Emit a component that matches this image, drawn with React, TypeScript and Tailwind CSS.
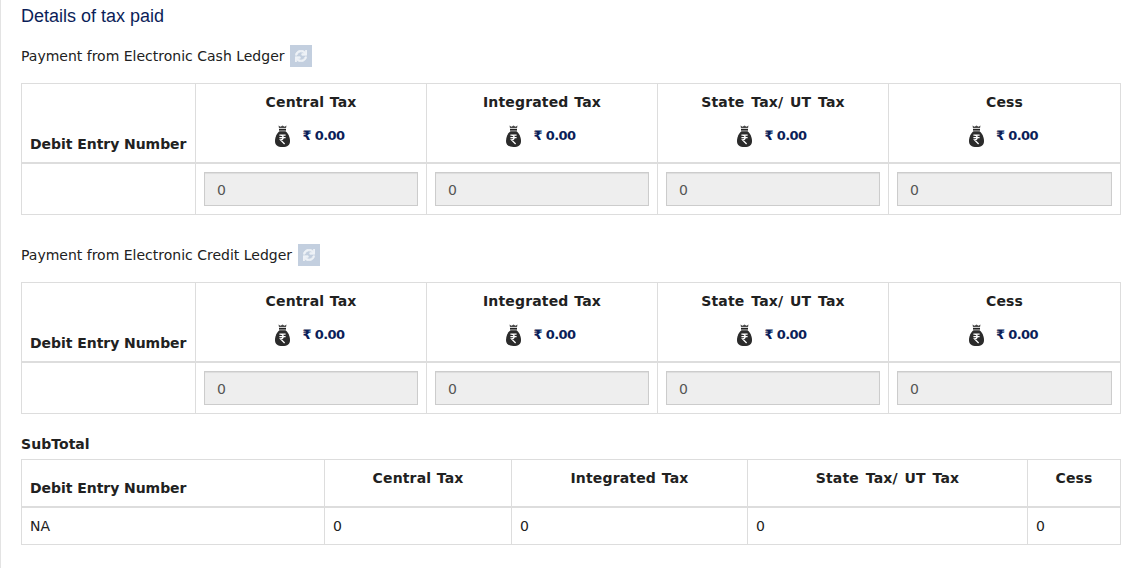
import { FaSync } from "react-icons/fa";

const taxes = [
  { label: "Central Tax", fit: "tracking-[0.15px] [word-spacing:0.5px]" },
  { label: "Integrated Tax", fit: "tracking-[0.15px] [word-spacing:0.8px]" },
  { label: "State Tax/ UT Tax", fit: "tracking-[0.15px] [word-spacing:1.8px]" },
  { label: "Cess", fit: "tracking-[0.15px]" },
];

function Bag() {
  return (
    <svg width="15" height="22" viewBox="0 0 15 22" className="block">
      <path d="M3.5 0.5 L5.5 1.8 L7.5 0.5 L9.5 1.8 L11.5 0.5 L11 3.2 H4 Z" fill="#4a4a4a" />
      <rect x="4" y="4" width="7" height="1.6" fill="#222" />
      <path d="M4.5 6.2 H10.5 C13 8 15 12 15 16 C15 20 12.5 22 7.5 22 C2.5 22 0 20 0 16 C0 12 2 8 4.5 6.2 Z" fill="#2b2b2b" />
      <path d="M4.4 10.2 H10.6 M4.4 12.6 H10.6 M5.6 10.2 C9 10.2 9 15 5.6 15 L9.6 19" fill="none" stroke="#fff" strokeWidth="1.3" />
    </svg>
  );
}

function Ledger({ title, className, iconGap }: { title: string; className: string; iconGap: string }) {
  return (
    <section className={className}>
      <div className="flex h-[22px] items-center text-[14px] text-[#212121]">
        <span>{title}</span>
        <span className={`${iconGap} inline-flex h-[22px] w-[22px] items-center justify-center bg-[#c3cfdf] text-[#eef2f7]`}>
          <FaSync size={12} stroke="currentColor" strokeWidth={30} />
        </span>
      </div>
      <table className="mt-[16px] w-[1099px] table-fixed border-collapse">
        <colgroup>
          <col className="w-[174px]" />
          <col className="w-[231px]" />
          <col className="w-[231px]" />
          <col className="w-[231px]" />
          <col className="w-[232px]" />
        </colgroup>
        <thead>
          <tr className="h-[79px]">
            <th className="border border-b-2 border-[#dddddd] px-2 pb-[8px] align-bottom text-left text-[14px] leading-[20px] font-bold tracking-[-0.05px] whitespace-nowrap text-[#212121]">
              Debit Entry Number
            </th>
            {taxes.map((t) => (
              <th key={t.label} className="border border-b-2 border-[#dddddd] px-2 align-top text-center font-bold">
                <div className={`${t.fit} mt-[8px] text-[14px] leading-[20px] text-[#212121]`}>{t.label}</div>
                <div className="mt-[13px] flex items-center justify-center gap-[12px] pr-[2px]">
                  <Bag />
                  <span className="text-[13px] leading-[20px] tracking-[-0.6px] text-[#0b1e59]">₹ 0.00</span>
                </div>
              </th>
            ))}
          </tr>
        </thead>
        <tbody>
          <tr className="h-[52px]">
            <td className="border border-[#dddddd]" />
            {taxes.map((t) => (
              <td key={t.label} className="border border-[#dddddd] px-2">
                <input
                  readOnly
                  value="0"
                  className="block h-[34px] w-full border border-[#cccccc] bg-[#eeeeee] px-[12px] pt-[2px] text-[14px] text-[#555555] shadow-[inset_0_1px_1px_rgba(0,0,0,0.075)] outline-none"
                />
              </td>
            ))}
          </tr>
        </tbody>
      </table>
    </section>
  );
}

function SubTotal() {
  return (
    <section className="mt-[20px]">
      <div className="text-[14px] leading-[20px] font-bold tracking-[0.05px] text-[#212121]">SubTotal</div>
      <table className="mt-[5px] w-[1099px] table-fixed border-collapse text-[14px] text-[#212121]">
        <colgroup>
          <col className="w-[303px]" />
          <col className="w-[187px]" />
          <col className="w-[236px]" />
          <col className="w-[280px]" />
          <col className="w-[93px]" />
        </colgroup>
        <thead>
          <tr className="h-[47px]">
            <th className="border border-b-2 border-[#dddddd] px-2 pb-[8px] align-bottom text-left leading-[20px] font-bold tracking-[-0.05px] whitespace-nowrap">
              Debit Entry Number
            </th>
            {taxes.map((t) => (
              <th key={t.label} className={`${t.fit} border border-b-2 border-[#dddddd] px-2 pt-[8px] align-top text-center leading-[20px] font-bold`}>
                {t.label}
              </th>
            ))}
          </tr>
        </thead>
        <tbody>
          <tr className="h-[38px]">
            <td className="border border-[#dddddd] px-2 pt-[2px]">NA</td>
            {taxes.map((t) => (
              <td key={t.label} className="border border-[#dddddd] px-2 pt-[2px]">0</td>
            ))}
          </tr>
        </tbody>
      </table>
    </section>
  );
}

export default function App() {
  return (
    <div className="h-[568px] w-[1133px] overflow-hidden border-l border-[#e3e3e3] bg-white pl-[20px] font-['DejaVu_Sans',Verdana,sans-serif]">
      <h4 className="pt-[6px] font-['Liberation_Sans',Arial,sans-serif] text-[18px] leading-[20px] font-normal text-[#0b1e59]">
        Details of tax paid
      </h4>
      <Ledger title="Payment from Electronic Cash Ledger" className="mt-[19px]" iconGap="ml-[5px]" />
      <Ledger title="Payment from Electronic Credit Ledger" className="mt-[29px]" iconGap="ml-[6px]" />
      <SubTotal />
    </div>
  );
}
